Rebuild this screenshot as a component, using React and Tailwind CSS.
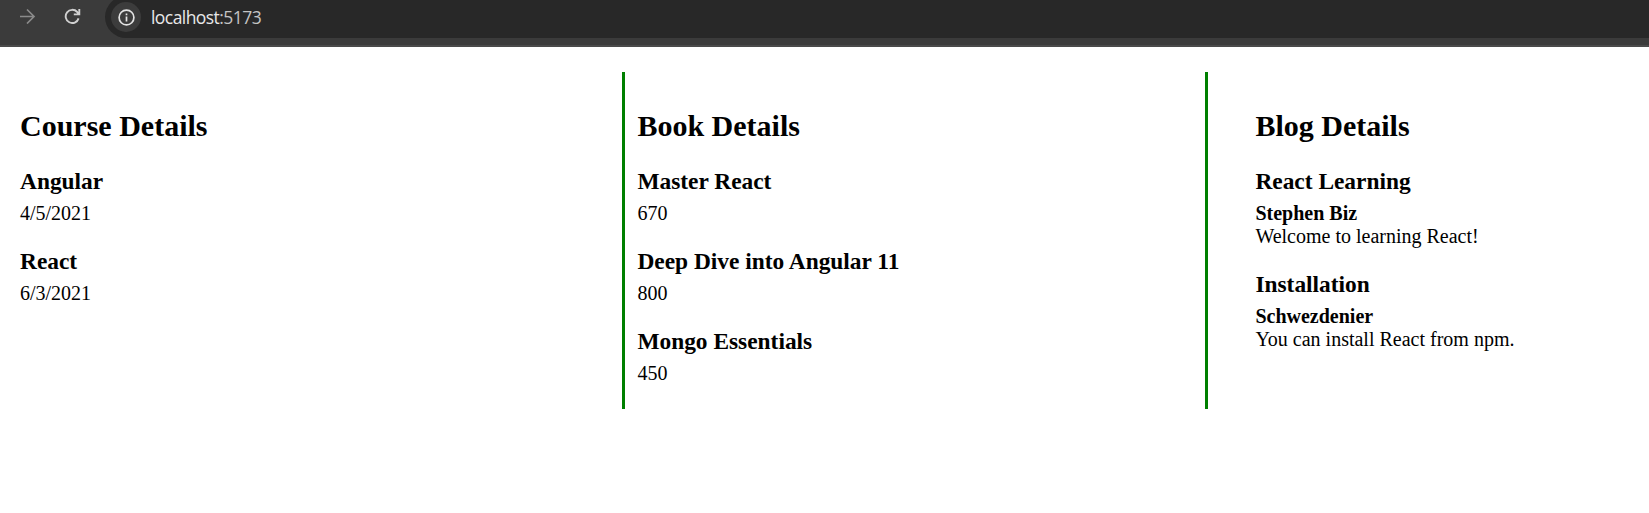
const courses = [
  { name: "Angular", lines: [{ text: "4/5/2021" }] },
  { name: "React", lines: [{ text: "6/3/2021" }] },
];

const books = [
  { name: "Master React", lines: [{ text: "670" }] },
  { name: "Deep Dive into Angular 11", lines: [{ text: "800" }] },
  { name: "Mongo Essentials", lines: [{ text: "450" }] },
];

const blogs = [
  {
    name: "React Learning",
    lines: [{ text: "Stephen Biz", bold: true }, { text: "Welcome to learning React!" }],
  },
  {
    name: "Installation",
    lines: [{ text: "Schwezdenier", bold: true }, { text: "You can install React from npm." }],
  },
];

function BrowserBar() {
  return (
    <header className="flex h-[47px] items-start overflow-hidden border-b-2 border-[#4a4a4a] bg-[#3b3b3b]">
      <svg className="mt-2 ml-5 h-4 w-4 shrink-0" viewBox="0 0 16 16" fill="none" stroke="#8a8a8a" strokeWidth="1.7">
        <path d="M0 8.5H14M7 1.5L14 8.5L7 15.5" />
      </svg>
      <svg className="mt-2 ml-7 h-4 w-[17px] shrink-0" viewBox="0 0 17 16" fill="none" stroke="#d0d0d0" strokeWidth="1.9">
        <path d="M14.6 10.4A6.6 6.6 0 1 1 13.2 4L14.6 5.8M15.3 1V6.4H9.8" />
      </svg>
      <div className="-mt-[4px] ml-6 flex h-[42px] flex-1 items-center rounded-l-full bg-[#282828] pl-1.5">
        <div className="flex h-[30px] w-[30px] items-center justify-center rounded-full bg-[#3c3c3c]">
          <svg className="h-[17px] w-[17px]" viewBox="0 0 17 17" fill="none" stroke="#e3e3e3" strokeWidth="1.7">
            <circle cx="8.5" cy="8.5" r="7.4" />
            <path d="M8.5 7.5V12.6M8.5 4.4V6.2" />
          </svg>
        </div>
        <span className="ml-2.5 pt-px font-['Open_Sans',sans-serif] text-[17.5px] tracking-[-0.56px] text-[#e8e8e8]">
          localhost<span className="text-[#c4c4c4]">:5173</span>
        </span>
      </div>
    </header>
  );
}

function Details({ title, items }) {
  return (
    <div className="pt-[37px]">
      <h2 className="mb-[25.3px] text-[30px] leading-[34px] font-bold">{title}</h2>
      {items.map((item) => (
        <div key={item.name} className="mb-[22.8px]">
          <h3 className="mb-[6.95px] text-[23.4px] leading-[27px] font-bold">{item.name}</h3>
          {item.lines.map((line) => (
            <p key={line.text} className={line.bold ? "text-[20px] leading-[23px] font-bold" : "text-[20px] leading-[23px]"}>
              {line.text}
            </p>
          ))}
        </div>
      ))}
    </div>
  );
}

export default function App() {
  return (
    <div className="min-h-screen bg-white font-['Liberation_Serif',serif] text-black">
      <BrowserBar />
      <main className="mt-[25px] grid h-[337px] grid-cols-[622px_586px_1fr]">
        <section className="pl-5">
          <Details title="Course Details" items={courses} />
        </section>
        <section className="border-x-[3px] border-[#008000] pl-[12.4px]">
          <Details title="Book Details" items={books} />
        </section>
        <section className="pl-[47.4px]">
          <Details title="Blog Details" items={blogs} />
        </section>
      </main>
    </div>
  );
}
